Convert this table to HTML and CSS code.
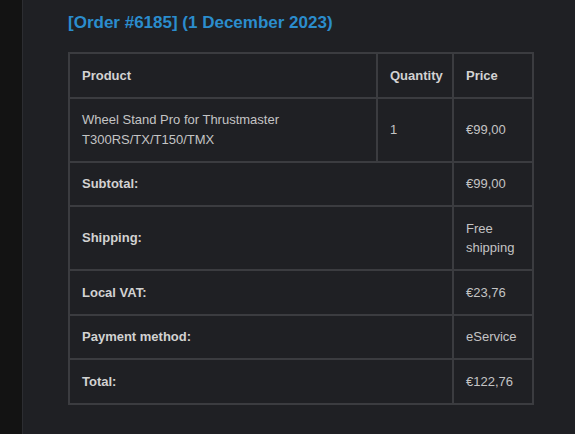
FILE: index.html
```html
<!DOCTYPE html>
<html>
<head>
<meta charset="utf-8">
<link rel="stylesheet" href="styles.css">
</head>
<body>
<div class="app">
  <aside class="strip"></aside>
  <main class="panel">
    <h2 class="order-title">[Order #6185] (1 December 2023)</h2>
    <table class="order-table">
      <thead>
        <tr>
          <th class="col-product">Product</th>
          <th class="col-qty">Quantity</th>
          <th class="col-price">Price</th>
        </tr>
      </thead>
      <tbody>
        <tr>
          <td>Wheel Stand Pro for Thrustmaster T300RS/TX/T150/TMX</td>
          <td>1</td>
          <td>€99,00</td>
        </tr>
      </tbody>
      <tfoot>
        <tr><th colspan="2">Subtotal:</th><td>€99,00</td></tr>
        <tr><th colspan="2">Shipping:</th><td>Free shipping</td></tr>
        <tr><th colspan="2">Local VAT:</th><td>€23,76</td></tr>
        <tr><th colspan="2">Payment method:</th><td>eService</td></tr>
        <tr><th colspan="2">Total:</th><td>€122,76</td></tr>
      </tfoot>
    </table>
  </main>
</div>
</body>
</html>
```

FILE: styles.css
```css
html, body {
  margin: 0;
  padding: 0;
  background: #1f2024;
}
body {
  font-family: "Liberation Sans", Arial, sans-serif;
  width: 575px;
  height: 434px;
  overflow: hidden;
}
.app {
  display: flex;
  height: 434px;
}
.strip {
  width: 22px;
  flex: none;
  background: #131313;
  border-right: 1px solid #2c2d31;
}
.panel {
  flex: 1;
  padding: 13px 0 0 45px;
  background: #1f2024;
}
.order-title {
  margin: 0 0 19px;
  font-size: 17px;
  line-height: 20px;
  font-weight: bold;
  color: #2b8dcd;
}
.order-table {
  width: 466px;
  table-layout: fixed;
  border-collapse: separate;
  border-spacing: 0;
  border: 1px solid #3b3c40;
  color: #c4c4c4;
  font-size: 13px;
  line-height: 19.5px;
}
.order-table th,
.order-table td {
  box-sizing: border-box;
  border: 1px solid #3b3c40;
  padding: 11.5px 10px 11.5px 12px;
  text-align: left;
  vertical-align: middle;
}
.order-table th {
  font-weight: bold;
  color: #d2d2d2;
}
.order-table td {
  font-weight: normal;
}
.col-qty {
  width: 76px;
}
.col-price {
  width: 80px;
}
```
